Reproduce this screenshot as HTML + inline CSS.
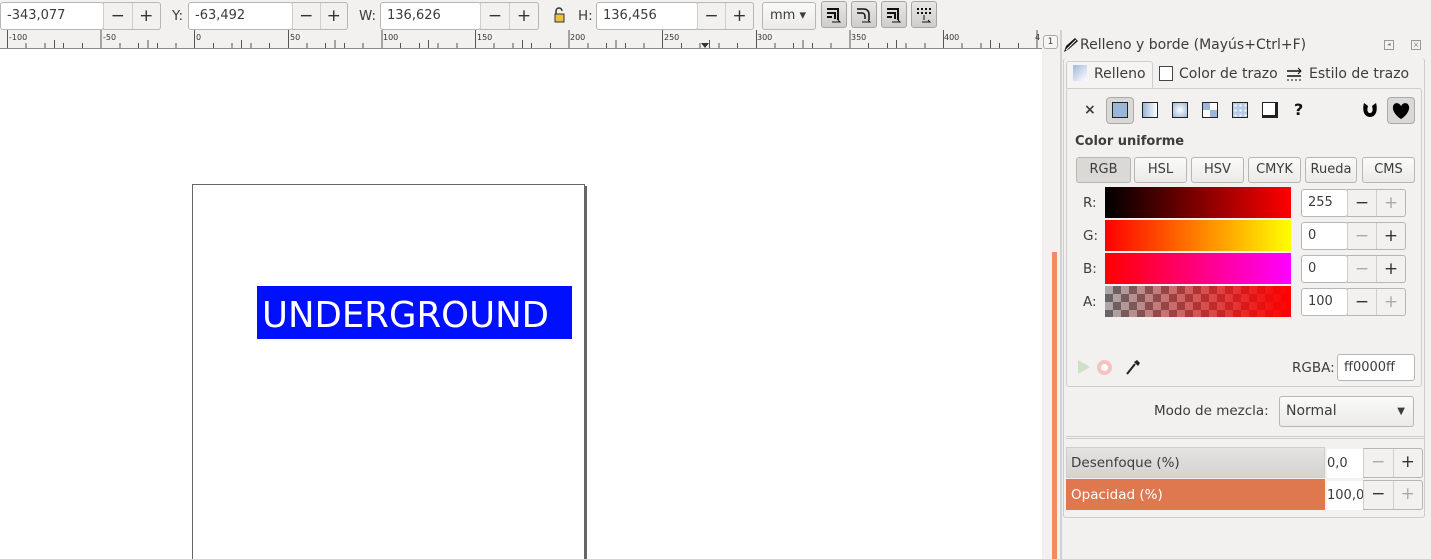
<!DOCTYPE html>
<html><head><meta charset="utf-8">
<style>
*{box-sizing:border-box;margin:0;padding:0}
html,body{overflow:hidden}
body{width:1431px;height:559px;overflow:hidden;background:#f2f1f0;font-family:"DejaVu Sans","Liberation Sans",sans-serif;font-size:13px;color:#3c3c3c;position:relative}
.a{position:absolute}
.fld{position:absolute;background:#fff;border:1px solid #b8b6b2;border-radius:3px;height:28px;line-height:26px;padding-left:6px;font-size:13px;color:#3c3c3c}
.btn{position:absolute;border:1px solid #b8b6b2;background:linear-gradient(#fafafa,#ebeae8);border-radius:3px;height:28px;text-align:center;line-height:26px;font-size:13px}
.sp{position:absolute;height:28px;border:1px solid #b8b6b2;border-left:none;border-radius:0 3px 3px 0;background:#f2f1f0;display:flex}
.sp span{flex:1;text-align:center;line-height:26px;font-size:17px;color:#333;border-left:1px solid #d0cec9}
.sp span.d{color:#aaa}
.lbl{position:absolute;font-size:13.5px;color:#3c3c3c}
.ib{position:absolute;width:26px;height:27px;top:1px;border:1px solid #a8a6a2;border-radius:3px;background:linear-gradient(#e8e7e5,#cfcdc9)}
.rl{position:absolute;top:33px;font-size:8px;color:#333}
</style></head><body>
<div class="fld" style="left:0;top:2px;width:104px">-343,077</div>
<div class="sp" style="left:103px;top:2px;width:58px"><span>−</span><span>+</span></div>
<div class="lbl" style="left:172px;top:8px">Y:</div>
<div class="fld" style="left:188px;top:2px;width:105px">-63,492</div>
<div class="sp" style="left:292px;top:2px;width:56px"><span>−</span><span>+</span></div>
<div class="lbl" style="left:359px;top:8px">W:</div>
<div class="fld" style="left:380px;top:2px;width:101px">136,626</div>
<div class="sp" style="left:480px;top:2px;width:59px"><span>−</span><span>+</span></div>
<svg class="a" style="left:553px;top:6px" width="14" height="18"><path d="M3 8V5a3 3 0 0 1 6 0" fill="none" stroke="#333" stroke-width="1.5"/><rect x="2" y="8" width="9" height="8" fill="#e8c23a" stroke="#333"/></svg>
<div class="lbl" style="left:578px;top:8px">H:</div>
<div class="fld" style="left:596px;top:2px;width:102px">136,456</div>
<div class="sp" style="left:697px;top:2px;width:57px"><span>−</span><span>+</span></div>
<div class="btn" style="left:762px;top:2px;width:54px;text-align:left;padding-left:7px">mm ▾</div>
<div class="ib" style="left:821px"></div><div class="ib" style="left:851px"></div><div class="ib" style="left:881px"></div><div class="ib" style="left:911px"></div>
<svg class="a" style="left:826px;top:6px" width="16" height="18"><path d="M1 3h11v11M1 7h8v6M1 11h5" fill="none" stroke="#111" stroke-width="2"/><path d="M6 16h8l-2-2" fill="none" stroke="#111"/></svg>
<svg class="a" style="left:856px;top:6px" width="16" height="18"><path d="M1 3h7a5 5 0 0 1 5 5v6M1 7h5a3 3 0 0 1 3 3v3" fill="none" stroke="#111" stroke-width="1.5"/><path d="M6 16h8l-2-2" fill="none" stroke="#111"/></svg>
<svg class="a" style="left:886px;top:6px" width="16" height="18"><path d="M1 3h11v11M1 7h8v6M1 11h5" fill="none" stroke="#111" stroke-width="2"/><path d="M6 16h8l-2-2" fill="none" stroke="#111"/></svg>
<svg class="a" style="left:916px;top:6px" width="16" height="18"><path d="M1 3h14M1 7h14" stroke="#111" stroke-width="2" stroke-dasharray="2 2"/><path d="M6 16h8l-2-2M8 9v5" fill="none" stroke="#111"/></svg>
<!-- ruler -->
<div class="a" style="left:0;top:30px;width:1042px;height:19px;background:#f2f1f0;border-bottom:1px solid #888"></div>
<div class="a" style="left:7px;top:43px;width:1035px;height:5px;background-image:repeating-linear-gradient(90deg,#555 0,#555 1px,transparent 1px,transparent 18.72px)"></div>
<div class="a" style="left:7px;top:40px;width:1035px;height:8px;background-image:repeating-linear-gradient(90deg,transparent 0,transparent 46.8px,#555 46.8px,#555 47.8px,transparent 47.8px,transparent 93.6px)"></div>
<div class="a" style="left:7px;top:30px;width:1035px;height:18px;background-image:repeating-linear-gradient(90deg,#555 0,#555 1px,transparent 1px,transparent 93.6px)"></div>
<div class="rl" style="left:9px">-100</div><div class="rl" style="left:103px">-50</div><div class="rl" style="left:196px">0</div><div class="rl" style="left:290px">50</div><div class="rl" style="left:383px">100</div><div class="rl" style="left:477px">150</div><div class="rl" style="left:570px">200</div><div class="rl" style="left:664px">250</div><div class="rl" style="left:757px">300</div><div class="rl" style="left:851px">350</div><div class="rl" style="left:944px">400</div><div class="rl" style="left:1035px">4</div>
<div class="a" style="left:701px;top:43px;width:0;height:0;border-left:4px solid transparent;border-right:4px solid transparent;border-top:5px solid #333"></div>
<!-- canvas -->
<div class="a" style="left:0;top:49px;width:1042px;height:510px;background:#fff;overflow:hidden">
<div class="a" style="left:192px;top:135px;width:393px;height:380px;border:1px solid #666;background:#fff"></div>
<div class="a" style="left:584px;top:137px;width:3px;height:380px;background:#666"></div>
<div class="a" style="left:257px;top:237px;width:315px;height:53px;background:#0010ff;color:#fff;font-size:35.5px;line-height:60px;padding-left:5px;font-family:'DejaVu Sans',sans-serif">UNDERGROUND</div>
</div>
<div class="a" style="left:1043px;top:35px;width:15px;height:14px;border:1px solid #aaa;border-radius:3px;background:#f5f5f5;font-size:9px;text-align:center;line-height:12px">1</div>
<div class="a" style="left:1052px;top:252px;width:5px;height:307px;background:#f28b64"></div>
<div class="a" style="left:1060px;top:30px;width:2px;height:529px;background:#d3d1cd"></div>
<!-- panel -->
<svg class="a" style="left:1063px;top:37px" width="16" height="16"><path d="M1 15L3 9 12 1 15 4 6 12Z" fill="#111"/><path d="M3 13L13 3" stroke="#fff" stroke-width="1"/></svg>
<div class="lbl" style="left:1080px;top:37px;font-size:14px">Relleno y borde (Mayús+Ctrl+F)</div>
<div class="a" style="left:1384px;top:40px;width:10px;height:10px;border:1px solid #999;font-size:6px;text-align:center;color:#777">◂</div>
<div class="a" style="left:1411px;top:40px;width:10px;height:10px;border:1px solid #999;font-size:7px;text-align:center;line-height:8px;color:#777">×</div>
<div class="a" style="left:1063px;top:58px;width:362px;height:460px;border:1px solid #cfcdc9;border-top:none;border-radius:3px"></div>
<div class="a" style="left:1066px;top:61px;width:87px;height:28px;border:1px solid #cfcdc9;border-bottom:none;border-radius:3px 3px 0 0;background:#f5f4f3"></div>
<div class="a" style="left:1073px;top:65px;width:14px;height:16px;background:linear-gradient(135deg,#9fb9dc,#fff)"></div>
<div class="lbl" style="left:1094px;top:66px;font-size:14px">Relleno</div>
<div class="a" style="left:1159px;top:66px;width:14px;height:15px;border:1px solid #444;background:#fff"></div>
<div class="lbl" style="left:1179px;top:66px;font-size:14px">Color de trazo</div>
<svg class="a" style="left:1286px;top:66px" width="18" height="16"><path d="M1 5h14M1 10h14" stroke="#111" stroke-width="1.5"/><path d="M12 2l3 3-3 3" fill="none" stroke="#111"/><path d="M1 14h14" stroke="#111" stroke-dasharray="2 2"/></svg>
<div class="lbl" style="left:1309px;top:66px;font-size:14px">Estilo de trazo</div>
<div class="a" style="left:1066px;top:88px;width:356px;height:299px;border:1px solid #cfcdc9;border-radius:3px"></div>
<div class="lbl" style="left:1084px;top:102px;font-weight:bold;font-size:14px">×</div>
<div class="a" style="left:1106px;top:97px;width:28px;height:27px;border:1px solid #aaa;border-radius:4px;background:#d9d8d5"></div>
<div class="a" style="left:1112px;top:102px;width:16px;height:16px;border:1.5px solid #222;background:#9bb7d8"></div>
<div class="a" style="left:1142px;top:102px;width:16px;height:16px;border:1.5px solid #222;background:linear-gradient(90deg,#9bb7d8,#fff)"></div>
<div class="a" style="left:1172px;top:102px;width:16px;height:16px;border:1.5px solid #222;background:radial-gradient(#fff,#9bb7d8)"></div>
<div class="a" style="left:1202px;top:102px;width:16px;height:16px;border:1.5px solid #222;background:conic-gradient(#fff 0 25%,#9bb7d8 25% 50%,#fff 50% 75%,#9bb7d8 75%)"></div>
<div class="a" style="left:1232px;top:102px;width:16px;height:16px;border:1.5px solid #222;background:radial-gradient(circle,#fff 30%,#b7cbe6 31%);background-size:5px 5px"></div>
<div class="a" style="left:1262px;top:102px;width:16px;height:16px;border:1.5px solid #222;background:#fff;box-shadow:inset -2px -2px 0 #222"></div>
<div class="lbl" style="left:1294px;top:100px;font-weight:bold;font-size:16px;color:#111">?</div>
<svg class="a" style="left:1362px;top:102px" width="16" height="17"><path d="M2 1C0 8 2 15 8 15S16 8 14 1L10 4c1 3 1 7-2 7S5 7 6 4Z" fill="#000"/></svg>
<div class="a" style="left:1387px;top:97px;width:28px;height:27px;border:1px solid #aaa;border-radius:4px;background:#d9d8d5"></div>
<svg class="a" style="left:1392px;top:102px" width="18" height="18"><path d="M9 4C6-1 0 1 1 7c1 5 6 9 8 10 2-1 7-5 8-10 1-6-5-8-8-3Z" fill="#000"/></svg>
<div class="lbl" style="left:1075px;top:134px;font-weight:bold;font-size:13px">Color uniforme</div>
<div class="btn" style="left:1076px;top:157px;width:55px;height:26px;line-height:24px;background:#dad9d6">RGB</div>
<div class="btn" style="left:1134px;top:157px;width:53px;height:26px;line-height:24px">HSL</div>
<div class="btn" style="left:1191px;top:157px;width:53px;height:26px;line-height:24px">HSV</div>
<div class="btn" style="left:1248px;top:157px;width:53px;height:26px;line-height:24px">CMYK</div>
<div class="btn" style="left:1305px;top:157px;width:52px;height:26px;line-height:24px">Rueda</div>
<div class="btn" style="left:1362px;top:157px;width:53px;height:26px;line-height:24px">CMS</div>
<div class="lbl" style="left:1083px;top:195px">R:</div>
<div class="lbl" style="left:1083px;top:228px">G:</div>
<div class="lbl" style="left:1083px;top:261px">B:</div>
<div class="lbl" style="left:1083px;top:294px">A:</div>
<div class="a" style="left:1105px;top:187px;width:186px;height:31px;background:linear-gradient(90deg,#000,#f00)"></div>
<div class="a" style="left:1105px;top:220px;width:186px;height:31px;background:linear-gradient(90deg,#f00,#ff0)"></div>
<div class="a" style="left:1105px;top:253px;width:186px;height:31px;background:linear-gradient(90deg,#f00,#f0f)"></div>
<div class="a" style="left:1105px;top:286px;width:186px;height:31px;background:linear-gradient(90deg,rgba(255,0,0,0),#f00),repeating-conic-gradient(#666 0 25%,#aaa 0 50%) 0 0/16px 16px"></div>
<div class="fld" style="left:1301px;top:189px;width:47px">255</div><div class="sp" style="left:1347px;top:189px;width:59px"><span>−</span><span class="d">+</span></div>
<div class="fld" style="left:1301px;top:222px;width:47px">0</div><div class="sp" style="left:1347px;top:222px;width:59px"><span class="d">−</span><span>+</span></div>
<div class="fld" style="left:1301px;top:255px;width:47px">0</div><div class="sp" style="left:1347px;top:255px;width:59px"><span class="d">−</span><span>+</span></div>
<div class="fld" style="left:1301px;top:288px;width:47px">100</div><div class="sp" style="left:1347px;top:288px;width:59px"><span>−</span><span class="d">+</span></div>
<div class="a" style="left:1078px;top:360px;width:0;height:0;border-top:7px solid transparent;border-bottom:7px solid transparent;border-left:12px solid #cde0c8"></div>
<div class="a" style="left:1097px;top:360px;width:15px;height:15px;border-radius:50%;border:4px solid #f5c2c4;background:#fff"></div>
<svg class="a" style="left:1125px;top:358px" width="16" height="18"><path d="M2 16L10 6" stroke="#222" stroke-width="2"/><path d="M9 4l4 4 2-3-3-3z" fill="#222"/></svg>
<div class="lbl" style="left:1292px;top:360px">RGBA:</div>
<div class="fld" style="left:1337px;top:354px;width:78px;height:27px;line-height:25px">ff0000ff</div>
<div class="lbl" style="left:1154px;top:403px">Modo de mezcla:</div>
<div class="btn" style="left:1279px;top:396px;width:135px;height:31px;line-height:29px;text-align:left;padding-left:6px;font-size:14px">Normal<span style="position:absolute;right:8px;font-size:10px">▼</span></div>
<div class="a" style="left:1066px;top:436px;width:358px;height:3px;border-top:1px solid #cfcdc9;border-bottom:1px solid #cfcdc9"></div>
<div class="a" style="left:1066px;top:447px;width:259px;height:31px;border:1px solid #cfcdc9;background:linear-gradient(#e4e3e1,#d4d3d0)"></div>
<div class="lbl" style="left:1071px;top:455px">Desenfoque (%)</div>
<div class="a" style="left:1327px;top:449px;width:37px;height:29px;background:#fff;line-height:29px;font-size:13px">0,0</div>
<div class="sp" style="left:1363px;top:448px;width:60px;height:30px"><span class="d">−</span><span>+</span></div>
<div class="a" style="left:1066px;top:479px;width:259px;height:31px;background:#e0784f"></div>
<div class="lbl" style="left:1071px;top:487px;color:#fff">Opacidad (%)</div>
<div class="a" style="left:1327px;top:481px;width:37px;height:29px;background:#fff;line-height:29px;font-size:13px">100,0</div>
<div class="sp" style="left:1363px;top:480px;width:60px;height:30px"><span>−</span><span class="d">+</span></div>
</body></html>
